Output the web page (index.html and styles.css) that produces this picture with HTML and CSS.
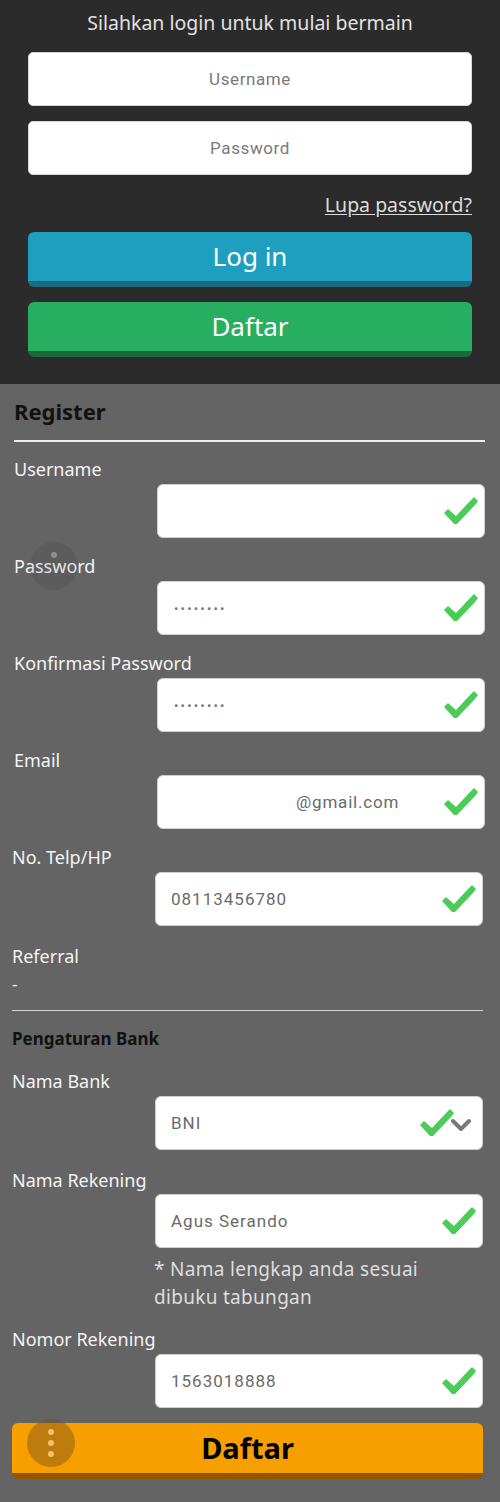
FILE: index.html
```html
<!DOCTYPE html>
<html lang="id">
<head>
<meta charset="utf-8">
<title>Login & Register</title>
<link rel="stylesheet" href="styles.css">
</head>
<body>
<div class="page">
  <section class="login">
    <h1 class="login-title">Silahkan login untuk mulai bermain</h1>
    <div class="login-input">Username</div>
    <div class="login-input second">Password</div>
    <div class="forgot-row"><a class="forgot" href="#">Lupa password?</a></div>
    <button class="btn btn-blue">Log in</button>
    <button class="btn btn-green">Daftar</button>
  </section>

  <section class="register">
    <div class="group upper">
      <h2 class="reg-title">Register</h2>
      <div class="rule"></div>
      <div class="field first">
        <div class="label">Username</div>
        <div class="input"><span class="val"></span><svg class="check" viewBox="0 0 34 28"><path d="M0 16 L4 12 L12 19 L27 3 L30 0 L34 4 L31 8 L13 27 L10 27 Z"/></svg></div>
      </div>
      <div class="field">
        <div class="label">Password</div>
        <div class="input"><span class="val dots">••••••••</span><svg class="check" viewBox="0 0 34 28"><path d="M0 16 L4 12 L12 19 L27 3 L30 0 L34 4 L31 8 L13 27 L10 27 Z"/></svg></div>
      </div>
      <div class="field">
        <div class="label">Konfirmasi Password</div>
        <div class="input"><span class="val dots">••••••••</span><svg class="check" viewBox="0 0 34 28"><path d="M0 16 L4 12 L12 19 L27 3 L30 0 L34 4 L31 8 L13 27 L10 27 Z"/></svg></div>
      </div>
      <div class="field">
        <div class="label">Email</div>
        <div class="input"><span class="val email">@gmail.com</span><svg class="check" viewBox="0 0 34 28"><path d="M0 16 L4 12 L12 19 L27 3 L30 0 L34 4 L31 8 L13 27 L10 27 Z"/></svg></div>
      </div>
    </div>
    <div class="group lower">
      <div class="field">
        <div class="label">No. Telp/HP</div>
        <div class="input"><span class="val">08113456780</span><svg class="check" viewBox="0 0 34 28"><path d="M0 16 L4 12 L12 19 L27 3 L30 0 L34 4 L31 8 L13 27 L10 27 Z"/></svg></div>
      </div>
      <div class="referral">
        <div class="label">Referral</div>
        <div class="ref-value">-</div>
      </div>
      <div class="rule thin"></div>
      <h3 class="bank-title">Pengaturan Bank</h3>
      <div class="field bank">
        <div class="label">Nama Bank</div>
        <div class="input select"><span class="val">BNI</span><svg class="check" viewBox="0 0 34 28"><path d="M0 16 L4 12 L12 19 L27 3 L30 0 L34 4 L31 8 L13 27 L10 27 Z"/></svg><svg class="chevron" viewBox="0 0 20 14"><path d="M2 3 L10 11 L18 3"/></svg></div>
      </div>
      <div class="field rek">
        <div class="label">Nama Rekening</div>
        <div class="input"><span class="val">Agus Serando</span><svg class="check" viewBox="0 0 34 28"><path d="M0 16 L4 12 L12 19 L27 3 L30 0 L34 4 L31 8 L13 27 L10 27 Z"/></svg></div>
        <p class="note">* Nama lengkap anda sesuai dibuku tabungan</p>
      </div>
      <div class="field nomor">
        <div class="label">Nomor Rekening</div>
        <div class="input"><span class="val">1563018888</span><svg class="check" viewBox="0 0 34 28"><path d="M0 16 L4 12 L12 19 L27 3 L30 0 L34 4 L31 8 L13 27 L10 27 Z"/></svg></div>
      </div>
      <button class="btn btn-orange">Daftar</button>
    </div>
  </section>

  <div class="fab fab-faint"><span class="dot"></span></div>
  <div class="fab fab-menu"><span class="dot"></span><span class="dot"></span><span class="dot"></span></div>
</div>
</body>
</html>
```

FILE: styles.css
```css
* { box-sizing: border-box; }
html, body { margin: 0; padding: 0; }
body {
  width: 500px;
  background: #646464;
  font-family: "Noto Sans", "Open Sans", sans-serif;
}
.page { position: relative; width: 500px; }

/* ---------- Login ---------- */
.login {
  background: #2b2b2b;
  padding: 10px 28px 27px 28px;
  display: flex;
  flex-direction: column;
}
.login-title {
  margin: 0;
  font-weight: 400;
  font-size: 19.5px;
  line-height: 26px;
  color: #e2e2e2;
  text-align: center;
}
.login-input {
  margin-top: 16px;
  height: 54px;
  background: #fff;
  border-radius: 5px;
  border: 1px solid #d6d6d6;
  display: flex;
  align-items: center;
  justify-content: center;
  font-family: Roboto, "Liberation Sans", sans-serif;
  font-size: 17px;
  letter-spacing: 0.6px;
  color: #7a7a7a;
}
.login-input.second { margin-top: 15px; }
.forgot-row {
  height: 32px;
  margin-top: 13px;
  display: flex;
  align-items: center;
  justify-content: flex-end;
}
.forgot {
  color: #dcdcdc;
  font-size: 19.5px;
  text-decoration: underline;
  text-underline-offset: 2px;
}
.btn {
  display: block;
  width: 100%;
  border: 0;
  border-radius: 6px;
  font-family: "Noto Sans", "Open Sans", sans-serif;
  cursor: pointer;
  padding: 0;
}
.btn-blue {
  margin-top: 12px;
  height: 55px;
  background: #1e9fbf;
  border-bottom: 6px solid #1b6a80;
  color: #fff;
  font-size: 26px;
  line-height: 47px;
}
.btn-green {
  margin-top: 15px;
  height: 55px;
  background: #27ae60;
  border-bottom: 6px solid #1e683d;
  color: #fff;
  font-size: 26px;
  line-height: 47px;
}

/* ---------- Register ---------- */
.register { padding-bottom: 24px; }
.group.upper { padding: 0 15px 0 14px; }
.group.lower { padding: 0 17px 0 12px; }
.reg-title {
  margin: 0;
  padding-top: 12px;
  font-size: 22px;
  line-height: 30px;
  font-weight: 700;
  color: #111;
}
.rule {
  margin-top: 14px;
  height: 2px;
  background: #eeeeee;
}
.rule.thin {
  margin-top: 14px;
  height: 1px;
  background: #d8d8d8;
}
.field { margin-top: 16px; display: flex; flex-direction: column; }
.field.first { margin-top: 15px; }
.label {
  font-size: 18px;
  line-height: 24px;
  height: 24px;
  color: #f4f4f4;
}
.input {
  margin-top: 3px;
  margin-left: auto;
  width: 328px;
  height: 54px;
  background: #fff;
  border-radius: 6px;
  border: 1px solid #cfcfcf;
  display: flex;
  align-items: center;
  padding: 0 6px 0 15px;
  font-family: Roboto, "Liberation Sans", sans-serif;
  font-size: 17px;
  letter-spacing: 1px;
  color: #6a6a6a;
}
.val { flex: 1; white-space: nowrap; }
.val.dots { font-size: 13px; letter-spacing: 2.2px; color: #777; padding-left: 1px; }
.val.email { padding-left: 123px; letter-spacing: 0.8px; }
.check {
  width: 34px;
  height: 28px;
  flex: none;
}
.check path { fill: #4bcc58; }
.input.select { padding-right: 11px; }
.input.select .check { margin-right: -3px; }
.chevron { width: 20px; height: 14px; flex: none; margin-top: 4px; }
.chevron path { fill: none; stroke: #7a7a7a; stroke-width: 4; stroke-linecap: round; stroke-linejoin: round; }

.referral { margin-top: 18px; }
.ref-value {
  font-size: 17px;
  line-height: 24px;
  margin-top: 4px;
  color: #f0f0f0;
}
.bank-title {
  margin: 16px 0 0;
  font-size: 17px;
  line-height: 24px;
  font-weight: 700;
  color: #111;
}
.field.bank { margin-top: 18px; }
.field.rek { margin-top: 18px; }
.field.rek .input { margin-top: 2px; }
.note {
  margin: 7px 0 0 142px;
  max-width: 300px;
  font-size: 19px;
  letter-spacing: 0.3px;
  line-height: 28px;
  color: #dedede;
}
.field.nomor { margin-top: 16px; }
.btn-orange {
  margin-top: 15px;
  height: 56px;
  background: #f89f00;
  border-bottom: 6px solid #935700;
  color: #000;
  font-weight: 700;
  font-size: 29px;
  line-height: 48px;
}

/* ---------- Floating buttons ---------- */
.fab {
  position: absolute;
  width: 48px;
  height: 48px;
  border-radius: 50%;
  display: flex;
  flex-direction: column;
  align-items: center;
  justify-content: center;
  gap: 5px;
}
.fab-faint {
  left: 30px;
  top: 542px;
  background: rgba(0, 0, 0, 0.07);
  justify-content: flex-start;
  padding-top: 10px;
}
.fab-faint .dot { background: #8e8e8e; }
.fab-menu {
  left: 27px;
  top: 1419px;
  background: rgba(120, 80, 30, 0.45);
}
.dot {
  width: 6px;
  height: 6px;
  border-radius: 50%;
  background: #f0c270;
}
```
